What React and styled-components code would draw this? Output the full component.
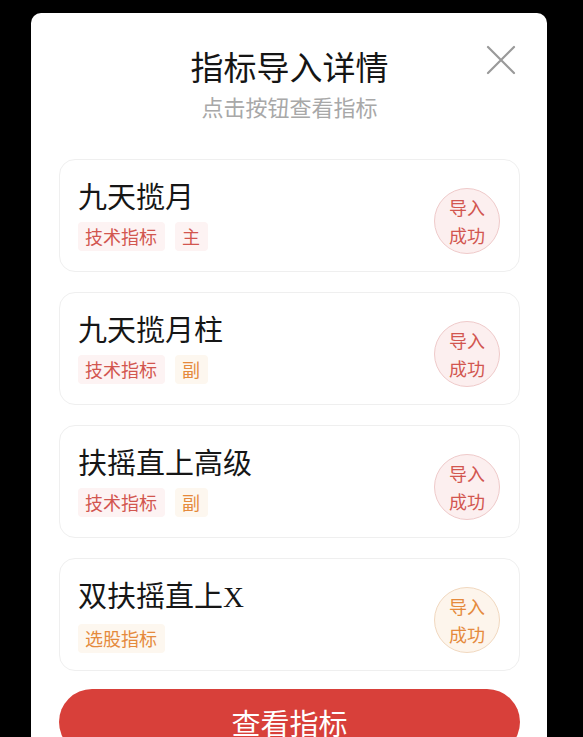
import React from "react";
import styled, { createGlobalStyle, css } from "styled-components";

const GlobalStyle = createGlobalStyle`
  html, body {
    margin: 0;
    padding: 0;
    background: #000;
    overflow: hidden;
  }
  body {
    font-family: "Noto Sans CJK SC", "Noto Sans", sans-serif;
  }
`;

const Page = styled.div`
  width: 583px;
  height: 737px;
  padding: 13px 36px 0 31px;
  box-sizing: border-box;
`;

const Modal = styled.div`
  position: relative;
  width: 516px;
  min-height: 760px;
  background: #fff;
  border-radius: 10px 10px 0 0;
  padding: 31px 27px 0 28px;
  box-sizing: border-box;
`;

const Title = styled.div`
  font-size: 33px;
  line-height: 44px;
  color: #151515;
  text-align: center;
`;

const Subtitle = styled.div`
  margin-top: 3px;
  font-size: 22px;
  line-height: 30px;
  color: #a8a8a8;
  text-align: center;
`;

const Close = styled.button`
  position: absolute;
  top: 32px;
  right: 31px;
  width: 30px;
  height: 30px;
  padding: 0;
  border: none;
  background: none;
  cursor: pointer;
`;

const List = styled.div`
  margin-top: 38px;
  display: flex;
  flex-direction: column;
  gap: 20px;
`;

const Card = styled.div`
  height: 113px;
  box-sizing: border-box;
  border: 1px solid #efefef;
  border-radius: 16px;
  padding: 15px 19px 0 18px;
  display: flex;
  align-items: center;
  justify-content: space-between;
`;

const Info = styled.div`
  display: flex;
  flex-direction: column;
  align-self: flex-start;
`;

const Name = styled.div`
  font-size: 29px;
  line-height: 40px;
  color: #161616;
`;

const Latin = styled.span`
  font-family: "Liberation Serif", serif;
`;

const Tags = styled.div`
  margin-top: 7px;
  display: flex;
  gap: 10px;
`;

const palette = {
  red: { fg: "#d2564f", bg: "#fdf3f3", border: "#efcaca", badgeBg: "#fcefef" },
  orange: { fg: "#e58a3c", bg: "#fdf7ef", border: "#f1d8bf", badgeBg: "#fdf5ec" },
};

const Tag = styled.span`
  font-size: 18px;
  line-height: 29px;
  padding: 0 8px 0 7px;
  border-radius: 4px;
  ${(p) => css`
    color: ${palette[p.tone].fg};
    background: ${palette[p.tone].bg};
  `}
`;

const Badge = styled.div`
  width: 66px;
  height: 66px;
  margin-top: -4px;
  box-sizing: border-box;
  border-radius: 50%;
  display: flex;
  align-items: center;
  justify-content: center;
  text-align: center;
  font-size: 18px;
  line-height: 28px;
  ${(p) => css`
    color: ${palette[p.tone].fg};
    background: ${palette[p.tone].badgeBg};
    border: 1px solid ${palette[p.tone].border};
  `}
`;

const Button = styled.button`
  margin-top: 18px;
  width: 100%;
  height: 66px;
  border: none;
  border-radius: 33px;
  background: #d8403a;
  color: #fff;
  font-family: inherit;
  font-size: 29px;
  cursor: pointer;
`;

const items = [
  { name: "九天揽月", tags: [["技术指标", "red"], ["主", "red"]], tone: "red" },
  { name: "九天揽月柱", tags: [["技术指标", "red"], ["副", "orange"]], tone: "red" },
  { name: "扶摇直上高级", tags: [["技术指标", "red"], ["副", "orange"]], tone: "red" },
  { name: "双扶摇直上", latin: "X", tags: [["选股指标", "orange"]], tone: "orange" },
];

export default function App() {
  return (
    <>
      <GlobalStyle />
      <Page>
        <Modal>
          <Title>指标导入详情</Title>
          <Subtitle>点击按钮查看指标</Subtitle>
          <Close aria-label="关闭">
            <svg width="30" height="30" viewBox="0 0 30 30">
              <path d="M2 2L28 28M28 2L2 28" stroke="#9a9a9a" strokeWidth="2.2" strokeLinecap="round" />
            </svg>
          </Close>
          <List>
            {items.map((item, index) => (
              <Card key={index}>
                <Info>
                  <Name>
                    {item.name}
                    {item.latin && <Latin>{item.latin}</Latin>}
                  </Name>
                  <Tags>
                    {item.tags.map(([label, tone]) => (
                      <Tag key={label} tone={tone}>{label}</Tag>
                    ))}
                  </Tags>
                </Info>
                <Badge tone={item.tone}>
                  导入
                  <br />
                  成功
                </Badge>
              </Card>
            ))}
          </List>
          <Button>查看指标</Button>
        </Modal>
      </Page>
    </>
  );
}
